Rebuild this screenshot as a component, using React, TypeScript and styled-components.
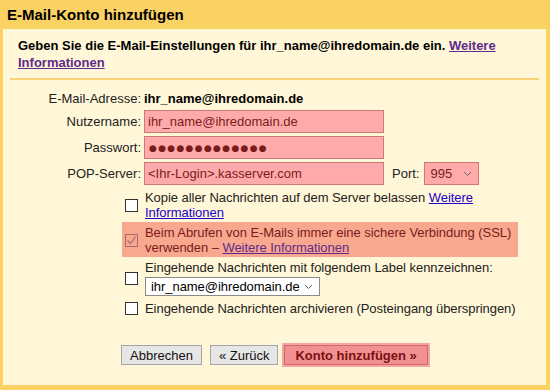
import styled, { createGlobalStyle } from "styled-components";

const GlobalStyle = createGlobalStyle`
  html, body {
    margin: 0;
    padding: 0;
    background: #fad163;
  }
  * {
    box-sizing: border-box;
  }
  body {
    font-family: "Liberation Sans", Arial, sans-serif;
    font-size: 13px;
    color: #000;
  }
`;

const Frame = styled.div`
  display: flex;
  flex-direction: column;
  width: 550px;
  height: 390px;
  padding: 0 4px 5px 3px;
  background: #fad163;
`;

const Title = styled.h1`
  margin: 0;
  height: 29px;
  padding-left: 4px;
  font-size: 15px;
  font-weight: bold;
  line-height: 29px;
`;

const Panel = styled.div`
  flex: 1;
  background: #fff7d7;
`;

const Intro = styled.p`
  margin: 0;
  padding: 8px 15px 7px;
  font-weight: bold;
  line-height: 17px;
`;

const Link = styled.a<{ visited?: boolean; bold?: boolean }>`
  color: ${(p) => (p.visited ? "#5f2a8c" : "#2200cc")};
  font-weight: ${(p) => (p.bold ? "bold" : "normal")};
  text-decoration: underline;
  cursor: pointer;
`;

const Separator = styled.hr`
  margin: 0 7px;
  height: 2px;
  border: 0;
  background: #f8d37a;
`;

const FormGrid = styled.div`
  display: grid;
  grid-template-columns: 138px auto;
  grid-template-rows: 18px 23px 23px 23px;
  column-gap: 3px;
  row-gap: 3px;
  align-items: center;
  padding-top: 9px;
`;

const Label = styled.label<{ tight?: boolean }>`
  text-align: right;
  color: #222;
  margin-right: ${(p) => (p.tight ? "-3px" : "0")};
`;

const Value = styled.span`
  font-weight: bold;
`;

const TextInput = styled.input<{ dots?: boolean }>`
  width: 240px;
  height: 23px;
  padding: 0 ${(p) => (p.dots ? "4px" : "3px")};
  border: 1px solid #d27575;
  box-shadow: inset 0 0 0 1px #f7b0b0;
  background: #ffaaaa;
  color: #7a1c1c;
  font-family: ${(p) => (p.dots ? '"DejaVu Sans", sans-serif' : '"Liberation Sans", Arial, sans-serif')};
  font-size: ${(p) => (p.dots ? "9px" : "13px")};
  letter-spacing: ${(p) => (p.dots ? "1.3px" : "normal")};
  outline: none;
`;

const ServerRow = styled.div`
  display: flex;
  align-items: center;
  gap: 8px;
`;

const SelectBox = styled.div<{ error?: boolean }>`
  display: flex;
  align-items: center;
  justify-content: space-between;
  width: ${(p) => (p.error ? "55px" : "175px")};
  height: ${(p) => (p.error ? "23px" : "19px")};
  padding: 0 6px 0 5px;
  border: 1px solid ${(p) => (p.error ? "#d27575" : "#8a8a8a")};
  background: ${(p) => (p.error ? "#ffaaaa" : "#fff")};
  color: ${(p) => (p.error ? "#7a1c1c" : "#000")};
`;

const Chevron = () => (
  <svg width="9" height="6" viewBox="0 0 9 6">
    <path d="M1 1l3.5 3.5L8 1" fill="none" stroke="#666" strokeWidth="1" />
  </svg>
);

const CheckList = styled.div`
  display: flex;
  flex-direction: column;
  width: 396px;
  margin: 2px 0 0 119px;
`;

const Option = styled.div<{ highlight?: boolean }>`
  display: flex;
  align-items: center;
  gap: 7px;
  padding: 3px 4px 2px 3px;
  line-height: 15px;
  background: ${(p) => (p.highlight ? "#f9a890" : "transparent")};
  color: ${(p) => (p.highlight ? "#7a1a1a" : "#222")};
`;

const Box = styled.span<{ checked?: boolean }>`
  flex: none;
  display: flex;
  align-items: center;
  justify-content: center;
  width: 13px;
  height: 13px;
  border: 1px solid ${(p) => (p.checked ? "#a86a6a" : "#333")};
  background: ${(p) => (p.checked ? "transparent" : "#fff")};
`;

const OptionText = styled.div`
  flex: 1;
  white-space: nowrap;
  letter-spacing: -0.05px;
`;

const LabelSelect = styled.div`
  margin: 2px 0 0;
`;

const Buttons = styled.div`
  display: flex;
  align-items: center;
  margin: 27px 0 0 118px;
`;

const Button = styled.button<{ primary?: boolean; gapAfter?: number }>`
  height: 20px;
  margin-right: ${(p) => p.gapAfter ?? 0}px;
  padding: 0 ${(p) => (p.primary ? "10px" : "8px")};
  border: 1px solid ${(p) => (p.primary ? "#d06868" : "#a5a5a5")};
  box-shadow: ${(p) => (p.primary ? "0 0 0 2px #f4a5a5" : "none")};
  background: ${(p) => (p.primary ? "#f09090" : "#e6e6e6")};
  color: ${(p) => (p.primary ? "#7b1010" : "#111")};
  font-family: "Liberation Sans", Arial, sans-serif;
  font-size: 13px;
  font-weight: ${(p) => (p.primary ? "bold" : "normal")};
  cursor: pointer;
`;

export default function App() {
  return (
    <>
      <GlobalStyle />
      <Frame>
        <Title>E-Mail-Konto hinzufügen</Title>
        <Panel>
          <Intro>
            Geben Sie die E-Mail-Einstellungen für ihr_name@ihredomain.de ein.{" "}
            <Link visited bold>
              Weitere
            </Link>
            <br />
            <Link visited bold>
              Informationen
            </Link>
          </Intro>
          <Separator />
          <FormGrid>
            <Label>E-Mail-Adresse:</Label>
            <Value>ihr_name@ihredomain.de</Value>
            <Label>Nutzername:</Label>
            <TextInput readOnly value="ihr_name@ihredomain.de" />
            <Label>Passwort:</Label>
            <TextInput readOnly dots value="●●●●●●●●●●●●●" />
            <Label>POP-Server:</Label>
            <ServerRow>
              <TextInput readOnly value="<Ihr-Login>.kasserver.com" />
              <Label tight>Port:</Label>
              <SelectBox error>
                <span>995</span>
                <Chevron />
              </SelectBox>
            </ServerRow>
          </FormGrid>
          <CheckList>
            <Option>
              <Box />
              <OptionText>
                Kopie aller Nachrichten auf dem Server belassen <Link>Weitere</Link>
                <br />
                <Link>Informationen</Link>
              </OptionText>
            </Option>
            <Option highlight>
              <Box checked>
                <svg width="11" height="11" viewBox="0 0 11 11">
                  <path d="M1.5 5.5l3 3 5-7" fill="none" stroke="#a86a6a" strokeWidth="1.2" />
                </svg>
              </Box>
              <OptionText>
                Beim Abrufen von E-Mails immer eine sichere Verbindung (SSL)
                <br />
                verwenden – <Link visited>Weitere Informationen</Link>
              </OptionText>
            </Option>
            <Option>
              <Box />
              <OptionText>
                Eingehende Nachrichten mit folgendem Label kennzeichnen:
                <LabelSelect>
                  <SelectBox>
                    <span>ihr_name@ihredomain.de</span>
                    <Chevron />
                  </SelectBox>
                </LabelSelect>
              </OptionText>
            </Option>
            <Option>
              <Box />
              <OptionText>Eingehende Nachrichten archivieren (Posteingang überspringen)</OptionText>
            </Option>
          </CheckList>
          <Buttons>
            <Button gapAfter={8}>Abbrechen</Button>
            <Button gapAfter={6}>« Zurück</Button>
            <Button primary>Konto hinzufügen »</Button>
          </Buttons>
        </Panel>
      </Frame>
    </>
  );
}
